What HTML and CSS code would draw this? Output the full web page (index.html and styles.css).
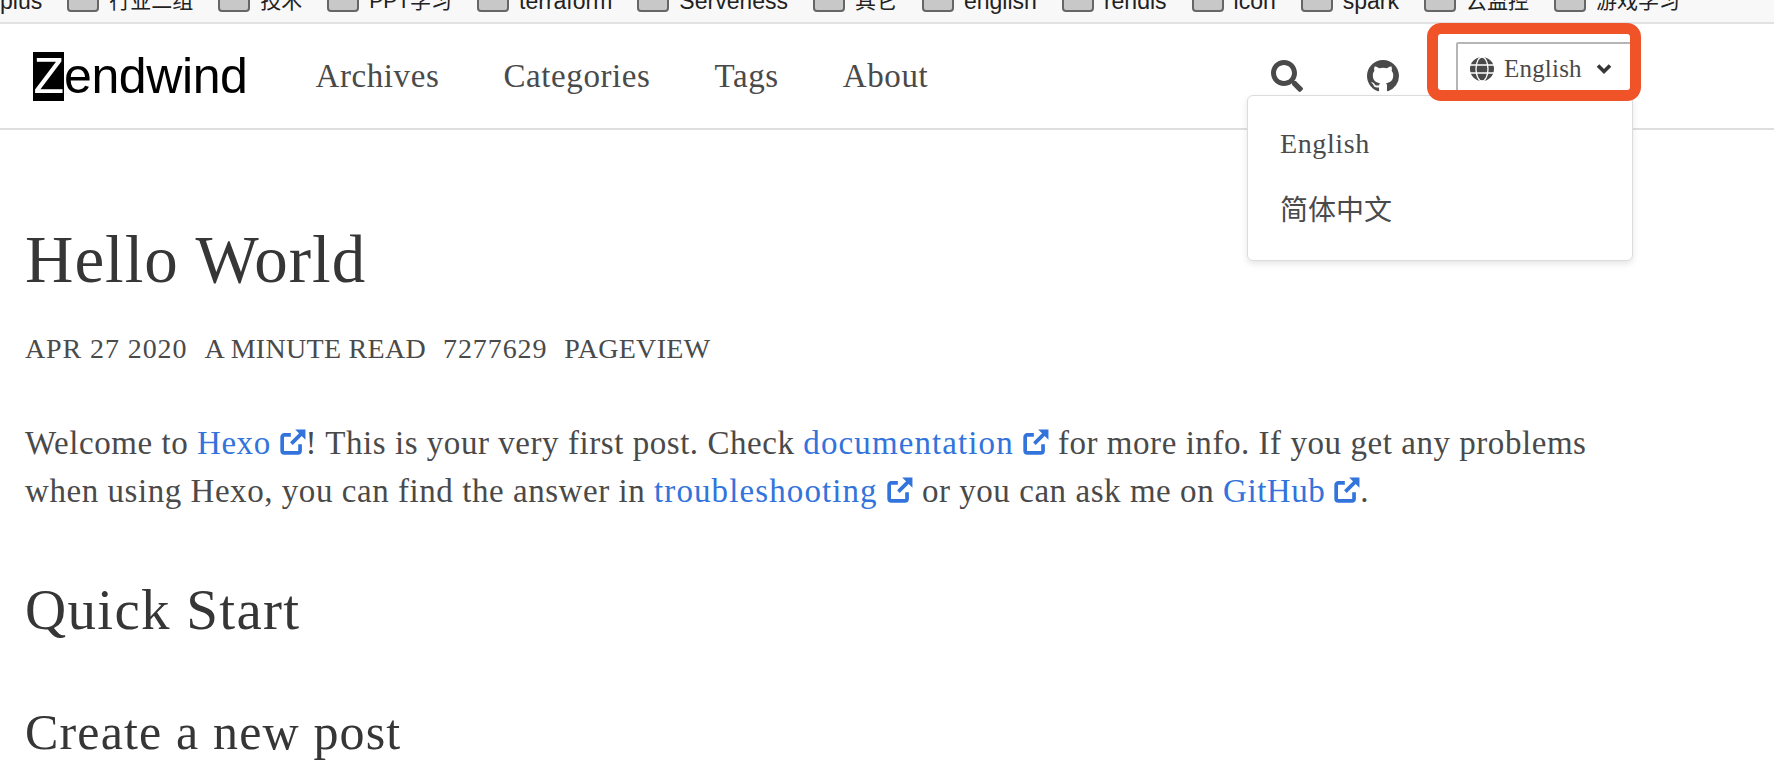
FILE: index.html
```html
<!DOCTYPE html>
<html lang="en">
  <head>
    <meta charset="UTF-8" />
    <title>Hello World - Zendwind</title>
    <link rel="stylesheet" href="styles.css">
  </head>
  <body>
    <div class="bookmarks">
      <span class="bm">plus</span>
      <i class="folder"></i><span class="bm bm-zh">行业二组</span>
      <i class="folder"></i><span class="bm bm-zh">技术</span>
      <i class="folder"></i><span class="bm bm-zh">PPT学习</span>
      <i class="folder"></i><span class="bm">terraform</span>
      <i class="folder"></i><span class="bm">Serverless</span>
      <i class="folder"></i><span class="bm bm-zh">其它</span>
      <i class="folder"></i><span class="bm">english</span>
      <i class="folder"></i><span class="bm">rendis</span>
      <i class="folder"></i><span class="bm">icon</span>
      <i class="folder"></i><span class="bm">spark</span>
      <i class="folder"></i><span class="bm bm-zh">云监控</span>
      <i class="folder"></i><span class="bm bm-zh">游戏学习</span>
    </div>

    <nav class="navbar">
      <a class="logo"><span class="logo-z">Z</span>endwind</a>
      <div class="nav-links">
        <a>Archives</a>
        <a>Categories</a>
        <a>Tags</a>
        <a>About</a>
      </div>
      <div class="nav-end">
        <svg class="icon-search" viewBox="0 0 512 512"><path d="M505 442.700L405.300 343c-4.500-4.500-10.600-7-17-7H372c27.600-35.300 44-79.700 44-128C416 93.100 322.900 0 208 0S0 93.100 0 208s93.100 208 208 208c48.300 0 92.700-16.400 128-44v16.300c0 6.400 2.500 12.500 7 17l99.700 99.700c9.400 9.400 24.600 9.400 33.900 0l28.300-28.300c9.400-9.400 9.400-24.600.1-34zM208 336c-70.700 0-128-57.200-128-128 0-70.700 57.200-128 128-128 70.700 0 128 57.200 128 128 0 70.700-57.200 128-128 128z"/></svg>
        <svg class="icon-github" viewBox="0 0 16 16"><path d="M8 0C3.580 0 0 3.580 0 8c0 3.540 2.290 6.530 5.470 7.590.4.070.55-.17.55-.38 0-.19-.01-.82-.01-1.490-2.010.37-2.530-.49-2.690-.94-.09-.23-.48-.94-.82-1.130-.28-.15-.68-.52-.01-.53.63-.01 1.080.58 1.230.82.720 1.210 1.870.87 2.330.66.070-.52.280-.87.510-1.070-1.780-.2-3.640-.89-3.640-3.950 0-.87.310-1.590.820-2.150-.08-.2-.36-1.020.08-2.120 0 0 .67-.21 2.200.82.640-.18 1.320-.27 2-.27s1.360.09 2 .27c1.530-1.040 2.200-.82 2.200-.82.440 1.100.16 1.920.08 2.120.51.560.82 1.270.82 2.150 0 3.070-1.870 3.750-3.650 3.950.29.250.54.730.54 1.480 0 1.070-.01 1.930-.01 2.200 0 .21.150.46.550.38A8.010 8.010 0 0 0 16 8c0-4.420-3.580-8-8-8z"/></svg>
        <div class="lang">
          <div class="lang-btn">
            <svg class="icon-globe" viewBox="0 0 24 24"><circle cx="12" cy="12" r="12" fill="#4a4a4a"/><g fill="none" stroke="#fff" stroke-width="1.300"><ellipse cx="12" cy="12" rx="6" ry="12"/><path d="M0 8h24M0 16h24"/></g></svg>
            <span>English</span>
            <svg class="icon-chevron" viewBox="0 0 16 12"><path d="M2 2.500l6 6 6-6" fill="none" stroke="#363636" stroke-width="3.600"/></svg>
          </div>
          <div class="lang-menu">
            <a>English</a>
            <a class="zh">简体中文</a>
          </div>
          <div class="lang-highlight"></div>
        </div>
      </div>
    </nav>

    <main class="post">
      <h1>Hello World</h1>
      <div class="meta">
        <span class="num">APR 27 2020</span>
        <span>A MINUTE READ</span>
        <span class="num">7277629</span>
        <span>PAGEVIEW</span>
      </div>
      <p>
        Welcome to <a>Hexo <svg class="ext" viewBox="0 0 24 24"><path d="M10 5.500H4a2 2 0 0 0-2 2V20a2 2 0 0 0 2 2h12.500a2 2 0 0 0 2-2v-6M10.500 13.500L20 4"/><polygon points="14,0.500 23.500,0.500 23.500,10"/></svg></a>! This is your very first post. Check
        <a class="long">documentation <svg class="ext" viewBox="0 0 24 24"><path d="M10 5.500H4a2 2 0 0 0-2 2V20a2 2 0 0 0 2 2h12.500a2 2 0 0 0 2-2v-6M10.500 13.500L20 4"/><polygon points="14,0.500 23.500,0.500 23.500,10"/></svg></a> for more info. If you get any problems<br />
        when using Hexo, you can find the answer in
        <a class="long">troubleshooting <svg class="ext" viewBox="0 0 24 24"><path d="M10 5.500H4a2 2 0 0 0-2 2V20a2 2 0 0 0 2 2h12.500a2 2 0 0 0 2-2v-6M10.500 13.500L20 4"/><polygon points="14,0.500 23.500,0.500 23.500,10"/></svg></a> or you can ask me on
        <a>GitHub <svg class="ext" viewBox="0 0 24 24"><path d="M10 5.500H4a2 2 0 0 0-2 2V20a2 2 0 0 0 2 2h12.500a2 2 0 0 0 2-2v-6M10.500 13.500L20 4"/><polygon points="14,0.500 23.500,0.500 23.500,10"/></svg></a>.
      </p>
      <h2>Quick Start</h2>
      <h3>Create a new post</h3>
    </main>
  </body>
</html>
```

FILE: styles.css
```css
html,
body {
  height: 768px;
  overflow: hidden;
}

body {
  margin: 0;
  background: #fff;
  color: #4a4a4a;
  font-family: "Liberation Serif", "Noto Sans CJK SC", serif;
}

/* browser bookmarks, cut off at the top of the shot */
.bookmarks {
  display: flex;
  align-items: flex-end;
  height: 13px;
  padding-bottom: 9px;
  background: #f8f8f8;
  border-bottom: 2px solid #e2e2e2;
  overflow: hidden;
  font-family: "Liberation Sans", "Noto Sans CJK SC", sans-serif;
  font-size: 23px;
  color: #222;
  line-height: 24px;
  white-space: nowrap;
}

.bm {
  margin-right: 25px;
}

.bm-zh {
  font-size: 21px;
}

.folder {
  flex: none;
  width: 28px;
  height: 24px;
  margin: 0 10px 1px 0;
  background: #c8c8c8;
  border: 2px solid #666;
  border-radius: 0 0 4px 4px;
}

/* navbar */
.navbar {
  display: flex;
  align-items: center;
  height: 104px;
  padding-left: 33px;
  border-bottom: 2px solid #dedede;
}

.logo {
  display: flex;
  font-family: "Liberation Sans", sans-serif;
  font-size: 50px;
  line-height: 49px;
  color: #000;
  letter-spacing: -0.4px;
}

.logo-z {
  width: 31px;
  background: #000;
  color: #fff;
  text-align: center;
}

.nav-links {
  display: flex;
  gap: 64px;
  margin-left: 68px;
  font-size: 33px;
  letter-spacing: 0.6px;
}

.nav-end {
  display: flex;
  align-items: center;
  align-self: stretch;
  margin-left: auto;
  margin-right: 141px;
}

.icon-search {
  width: 32px;
  height: 32px;
  fill: #4a4a4a;
  margin-right: 64px;
}

.icon-github {
  width: 32px;
  height: 32px;
  fill: #4a4a4a;
  margin-right: 57px;
}

.lang {
  position: relative;
  align-self: flex-start;
  width: 177px;
  margin-top: 18px;
}

.lang-btn {
  display: flex;
  align-items: center;
  height: 54px;
  box-sizing: border-box;
  border: 2px solid #b5b5b5;
  border-radius: 2px;
  padding: 0 19px 0 12px;
  font-size: 25px;
  letter-spacing: 0.2px;
}

.icon-globe {
  width: 24px;
  height: 24px;
  margin-right: 10px;
}

.icon-chevron {
  width: 16px;
  height: 12px;
  margin-left: auto;
}

.lang-highlight {
  position: absolute;
  left: -29px;
  top: -19px;
  width: 214px;
  height: 78px;
  box-sizing: border-box;
  border: 11px solid #f05327;
  border-radius: 14px;
}

.lang-menu {
  position: absolute;
  right: 0;
  top: 53px;
  width: 386px;
  height: 166px;
  box-sizing: border-box;
  background: #fff;
  border: 1px solid #dcdcdc;
  border-radius: 6px;
  box-shadow: 0 3px 6px rgba(10, 10, 10, 0.1);
  padding: 28px 0 0 32px;
  font-size: 28px;
  letter-spacing: 0.6px;
}

.lang-menu a {
  display: block;
  height: 64px;
  line-height: 40px;
}

.lang-menu .zh {
  font-family: "Noto Sans CJK SC", sans-serif;
  letter-spacing: 0;
}

/* post */
.post {
  padding: 0 25px;
}

h1,
h2,
h3 {
  font-weight: normal;
  margin: 0;
  color: #363636;
}

h1 {
  font-size: 67px;
  line-height: 74px;
  margin-top: 92px;
  letter-spacing: 1px;
}

.meta {
  display: flex;
  gap: 17px;
  margin-top: 35px;
  font-size: 28px;
  line-height: 36px;
  letter-spacing: 0.3px;
}

.meta .num {
  letter-spacing: 0.9px;
}

.post p {
  margin: 52px 0 0;
  font-size: 33px;
  line-height: 48px;
  letter-spacing: 0.55px;
}

.post p a {
  color: #3273dc;
}

.post p a.long {
  letter-spacing: 1.1px;
}

.ext {
  width: 26px;
  height: 26px;
  fill: none;
  stroke: #3273dc;
  stroke-width: 3.400;
  vertical-align: -1px;
}

.ext polygon {
  fill: #3273dc;
  stroke: none;
}

h2 {
  font-size: 57px;
  line-height: 64px;
  margin-top: 63px;
  letter-spacing: 1.300px;
}

h3 {
  font-size: 50px;
  line-height: 54px;
  margin-top: 63px;
  letter-spacing: 1.150px;
}
```
